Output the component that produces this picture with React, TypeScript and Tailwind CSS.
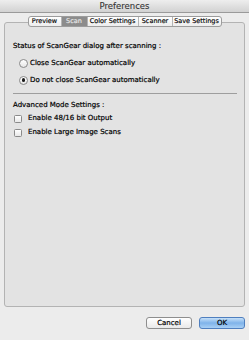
import React from "react";

const font = { fontFamily: '"DejaVu Sans", "Liberation Sans", sans-serif' };

function Radio({ checked, label }: { checked?: boolean; label: string }) {
  return (
    <div className="flex items-center h-[10px]">
      <div className="w-[9px] h-[9px] rounded-full border border-[#8a8a8a] bg-gradient-to-b from-[#ffffff] to-[#e6e6e6] flex items-center justify-center shrink-0">
        {checked && <div className="w-[3.5px] h-[3.5px] rounded-full bg-[#1a1a1a]" />}
      </div>
      <span className="ml-[2px] text-[7px] leading-none text-black whitespace-nowrap [-webkit-text-stroke:0.2px_#000]">{label}</span>
    </div>
  );
}

function Check({ label }: { label: string }) {
  return (
    <div className="flex items-center h-[9px]">
      <div className="w-[8px] h-[8px] rounded-[1.5px] border border-[#8a8a8a] bg-gradient-to-b from-[#ffffff] to-[#e8e8e8] shrink-0" />
      <span className="ml-[6px] text-[7px] leading-none text-black whitespace-nowrap [-webkit-text-stroke:0.2px_#000]">{label}</span>
    </div>
  );
}

const tabs = ["Preview", "Scan", "Color Settings", "Scanner", "Save Settings"];
const tabW = [32, 26, 51, 34, 49];

export default function App() {
  return (
    <div className="w-[249px] h-[340px] bg-[#ececec] flex flex-col overflow-hidden" style={font}>
      <div className="h-[13px] shrink-0 bg-gradient-to-b from-[#eeeeee] to-[#d2d2d2] border-b border-[#9a9a9a] flex items-center justify-center">
        <span className="text-[8.5px] leading-none text-[#333] [-webkit-text-stroke:0.1px_#333]">Preferences</span>
      </div>
      <div className="flex flex-col px-[4px] pt-[3px]">
        <div className="flex justify-center relative z-10 h-[11px]">
          <div className="flex h-[11px] rounded-[3px] border border-[#9c9c9c] bg-gradient-to-b from-[#ffffff] to-[#ededed] overflow-hidden">
            {tabs.map((t, i) => (
              <div
                key={t}
                style={{ width: tabW[i] }}
                className={
                  "flex items-center justify-center text-[6.5px] leading-none whitespace-nowrap [-webkit-text-stroke:0.15px_currentColor] " +
                  (i > 0 ? "border-l border-[#b5b5b5] " : "") +
                  (t === "Scan" ? "bg-[#8c8c8c] text-[#e8e8e8]" : "text-black")
                }
              >
                {t}
              </div>
            ))}
          </div>
        </div>
        <div className="-mt-[5px] h-[285px] rounded-[3px] border border-[#b3b3b3] bg-[#e3e3e3] flex flex-col pl-[8px] pr-[7px] pt-[19px]">
          <div className="text-[7px] leading-none text-black whitespace-nowrap h-[9px] flex items-center [-webkit-text-stroke:0.2px_#000]">
            Status of ScanGear dialog after scanning :
          </div>
          <div className="flex flex-col gap-[7px] pl-[6px] mt-[7px]">
            <Radio label="Close ScanGear automatically" />
            <Radio checked label="Do not close ScanGear automatically" />
          </div>
          <div className="h-px bg-[#9e9e9e] mt-[8px]" />
          <div className="mt-[7px] text-[7px] leading-none text-black whitespace-nowrap h-[9px] flex items-center [-webkit-text-stroke:0.2px_#000]">
            Advanced Mode Settings :
          </div>
          <div className="flex flex-col gap-[5px] mt-[4px] pl-[1px]">
            <Check label="Enable 48/16 bit Output" />
            <Check label="Enable Large Image Scans" />
          </div>
        </div>
      </div>
      <div className="flex justify-end gap-[7px] pr-[4px] mt-[10px]">
        <div className="w-[46px] h-[12px] rounded-[3px] border border-[#8e8e8e] bg-gradient-to-b from-[#ffffff] to-[#e9e9e9] flex items-center justify-center text-[7px] leading-none text-black [-webkit-text-stroke:0.2px_#000]">
          Cancel
        </div>
        <div className="w-[46px] h-[12px] rounded-[3px] border border-[#4f7fbf] bg-gradient-to-b from-[#c6e0f8] via-[#7fb3ea] to-[#a9d0f5] flex items-center justify-center text-[7px] leading-none text-black [-webkit-text-stroke:0.2px_#000]">
          OK
        </div>
      </div>
    </div>
  );
}
